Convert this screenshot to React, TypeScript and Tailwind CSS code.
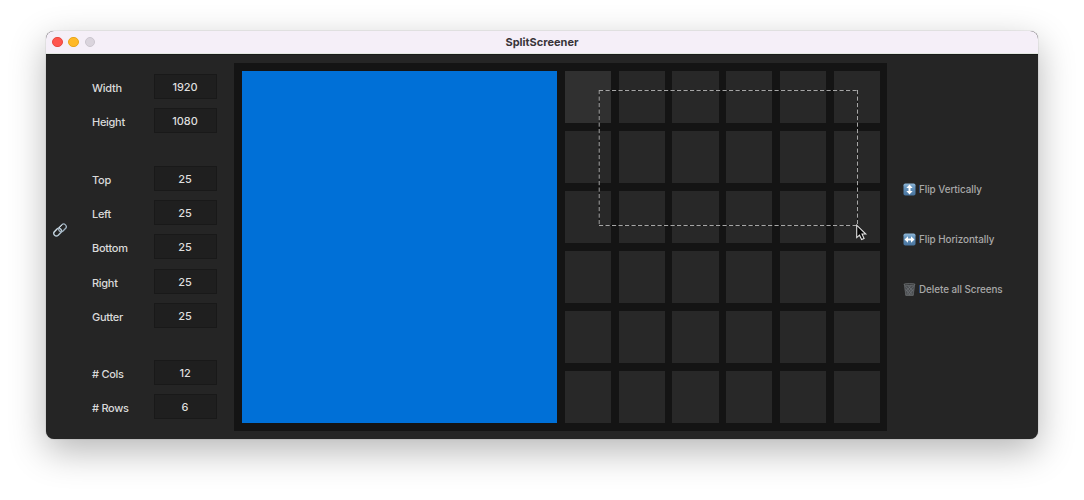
import React from "react";

const groups: [string, number][][] = [
  [["Width", 1920], ["Height", 1080]],
  [["Top", 25], ["Left", 25], ["Bottom", 25], ["Right", 25], ["Gutter", 25]],
  [["# Cols", 12], ["# Rows", 6]],
];

function Field({ label, value }: { label: string; value: number }) {
  return (
    <label className="flex h-[25px] items-center justify-between">
      <span className="pt-[3px] text-[11px] font-medium leading-[14px] tracking-[-0.28px] text-[#dadada]">{label}</span>
      <span className="flex h-[25px] w-[63px] items-center justify-center border border-[#191919] bg-[#1f1f1f] pr-px pt-px text-[11px] font-medium leading-[14px] tracking-[-0.1px] text-[#dedede]">
        {value}
      </span>
    </label>
  );
}

function LinkIcon() {
  return (
    <svg className="h-[14px] w-[14px]" viewBox="0 0 14 14" fill="none">
      <g transform="rotate(-45 7 7)">
        <rect x="-0.5" y="4.2" width="8.6" height="5.2" rx="2.6" stroke="#b9cbd7" strokeWidth="1.4" />
        <rect x="5.9" y="4.6" width="8.6" height="5.2" rx="2.6" stroke="#a0b2c1" strokeWidth="1.3" />
        <path d="M1.2 4.4h4.6M7.6 4.8h4.8" stroke="#f0f5f8" strokeWidth="0.7" />
      </g>
    </svg>
  );
}

function FlipIcon({ horizontal = false }: { horizontal?: boolean }) {
  return (
    <svg className="h-[13px] w-[13px] shrink-0" viewBox="0 0 13 13">
      <defs>
        <linearGradient id={horizontal ? "tile-h" : "tile-v"} x1="0" y1="0" x2="0" y2="1">
          <stop offset="0" stopColor="#92b9d8" />
          <stop offset="0.3" stopColor="#6796bf" />
          <stop offset="1" stopColor="#47739e" />
        </linearGradient>
      </defs>
      <rect x="0.5" y="0.5" width="12" height="12" rx="1.8" fill={horizontal ? "url(#tile-h)" : "url(#tile-v)"} />
      <path
        d="M6.5 1.5 9.7 5H7.5v3h2.2L6.5 11.5 3.3 8h2.2V5H3.3Z"
        fill="#fff"
        transform={horizontal ? "rotate(90 6.5 6.5)" : undefined}
      />
    </svg>
  );
}

function TrashIcon() {
  return (
    <svg className="h-[13px] w-[13px] shrink-0" viewBox="0 0 13 13" fill="none">
      <path d="M1 1.5h11l-1.4 10.2q-.1.9-1 .9H3.4q-.9 0-1-.9Z" fill="#494c4f" />
      <path d="m2.4 3 6.8 8M5 2.5l5 6M2.6 6l4.2 5.6M10.6 3l-6.8 8M8 2.5l-5 6M10.4 6l-4.2 5.6" stroke="#85898c" strokeWidth="0.45" />
      <path d="m1.5 2 1.2 10M11.5 2l-1.2 10" stroke="#6b6e71" strokeWidth="0.6" />
      <path d="M2.5 12.2h8" stroke="#85898c" strokeWidth="0.7" />
      <ellipse cx="6.5" cy="1.4" rx="5.7" ry="0.9" fill="#303133" stroke="#808487" strokeWidth="0.6" />
    </svg>
  );
}

function Selection() {
  return (
    <svg className="pointer-events-none absolute left-[362px] top-[24px] h-[156px] w-[274px]" viewBox="0 0 274 156" fill="none">
      <path d="M3 3.5H261.5M3.2 3V138M3 138.5H261.5M261.5 3V138" stroke="#080808" strokeOpacity="0.6" />
      <path d="M3 3.5H261.5M3 138.5H261.5" stroke="#a6a6a6" strokeDasharray="4.2 2.3" />
      <path d="M3.2 3V138M261.5 3V138" stroke="#a6a6a6" strokeDasharray="4.2 2.3" />
      <path d="M260.7 138.2V150.7l2.8-2.5 2.1 4.4 2.5-1.1-2.1-4.4h3.8Z" fill="#080808" stroke="#e5e5e5" strokeWidth="1.05" />
    </svg>
  );
}

export default function App() {
  return (
    <div className="flex h-[500px] w-[1084px] items-start justify-center overflow-hidden bg-white pt-[31px] font-['Inter',sans-serif]">
      <main className="flex h-[408px] w-[992px] flex-col overflow-hidden rounded-[8px] bg-[#252525] shadow-[0_0_1px_rgba(0,0,0,0.5),0_12px_36px_rgba(0,0,0,0.29)]">
        <header className="grid h-[23px] shrink-0 grid-cols-3 items-center border-b border-[#e4e8e3] bg-[#f5eff8]">
          <div className="flex gap-[5.8px] pl-[6px]">
            <span className="size-[10.5px] rounded-full border border-[#e8473f] bg-[#ff554e]" />
            <span className="size-[10.5px] rounded-full border border-[#e7a51c] bg-[#ffb927]" />
            <span className="size-[10.5px] rounded-full border border-[#cbc5ce] bg-[#dad4dd]" />
          </div>
          <h1 className="text-center text-[11px] font-bold leading-[14px] text-[#393539]">SplitScreener</h1>
        </header>
        <div className="flex min-h-0 flex-1 border-t border-[#191c19]">
          <div className="flex w-[46px] shrink-0 items-center pl-[7px] pb-[34px]">
            <LinkIcon />
          </div>
          <section className="flex w-[125px] shrink-0 flex-col gap-[32.2px] pt-[19.2px]">
            {groups.map((fields, i) => (
              <div key={i} className="flex flex-col gap-[9.3px]">
                {fields.map(([label, value]) => <Field key={label} label={label} value={value} />)}
              </div>
            ))}
          </section>
          <section className="relative ml-[17px] mt-[8px] grid h-[368px] w-[653px] shrink-0 grid-cols-12 grid-rows-6 gap-[7.5px] bg-[#141414] p-[8px] pr-[7px]">
            <div className="col-span-6 row-span-6 bg-[#0070d7]" />
            {Array.from({ length: 36 }, (_, i) => (
              <div key={i} className={i === 0 ? "bg-[#303030]" : "bg-[#282828]"} />
            ))}
            <Selection />
          </section>
          <aside className="flex flex-col gap-[36px] pl-[16px] pt-[127px] text-[9.9px] font-medium leading-[14px] tracking-[-0.06px] text-[#a8a8a8]">
            <div className="flex items-center gap-[3px]"><FlipIcon /><span>Flip Vertically</span></div>
            <div className="flex items-center gap-[3px]"><FlipIcon horizontal /><span>Flip Horizontally</span></div>
            <div className="flex items-center gap-[3px]"><TrashIcon /><span>Delete all Screens</span></div>
          </aside>
        </div>
      </main>
    </div>
  );
}
